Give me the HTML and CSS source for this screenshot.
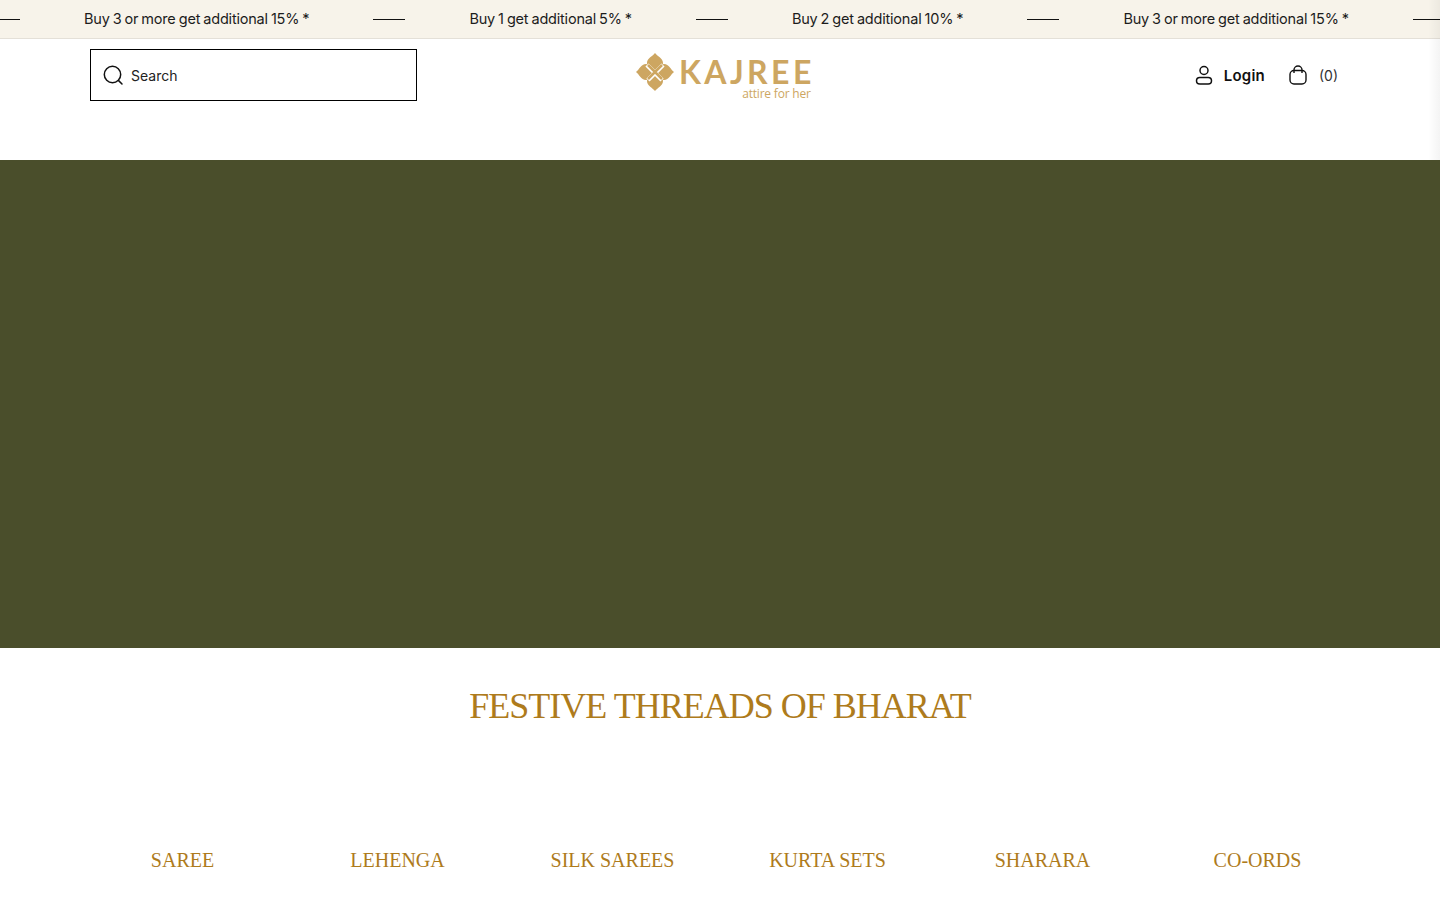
FILE: index.html
```html
<!DOCTYPE html>
<html lang="en">
<head>
  <meta charset="UTF-8">
  <title>Kajree - attire for her</title>
  <link rel="stylesheet" href="styles.css">
</head>
<body>
  <div class="announce">
    <div class="announce-track">
      <span class="announce-line"></span>
      <span class="announce-text">Buy 3 or more get additional 15% *</span>
      <span class="announce-line"></span>
      <span class="announce-text">Buy 1 get additional 5% *</span>
      <span class="announce-line"></span>
      <span class="announce-text">Buy 2 get additional 10% *</span>
      <span class="announce-line"></span>
      <span class="announce-text">Buy 3 or more get additional 15% *</span>
      <span class="announce-line"></span>
    </div>
  </div>

  <header class="header">
    <div class="search">
      <svg class="icon" width="22" height="22" viewBox="0 0 22 22" fill="none" stroke="#111" stroke-width="1.5">
        <circle cx="10.5" cy="10.5" r="8.2"/>
        <path d="M16.6 16.6L20 20" stroke-linecap="round"/>
      </svg>
      <span class="search-label">Search</span>
    </div>

    <a class="logo" href="#">
      <svg class="logo-mark" width="38" height="38" viewBox="0 0 38 38">
        <g fill="#cda661">
          <path d="M19 0C21 3 27 5 27 10C27 13 24 15 19 18C14 15 11 13 11 10C11 5 17 3 19 0Z"/>
          <path d="M19 38C21 35 27 33 27 28C27 25 24 23 19 20C14 23 11 25 11 28C11 33 17 35 19 38Z"/>
          <path d="M0 19C3 17 5 11 10 11C13 11 15 14 18 19C15 24 13 27 10 27C5 27 3 21 0 19Z"/>
          <path d="M38 19C35 17 33 11 28 11C25 11 23 14 20 19C23 24 25 27 28 27C33 27 35 21 38 19Z"/>
        </g>
        <path d="M11 12L26 27M27 12L12 27" fill="none" stroke="#fff" stroke-width="4.500"/>
        <path d="M12 12L26 26M26 12L12 26" fill="none" stroke="#cda661" stroke-width="2.500"/>
      </svg>
      <span class="logo-words">
        <span class="logo-name">KAJREE</span>
        <span class="logo-tag">attire for her</span>
      </span>
    </a>

    <div class="header-actions">
      <a class="login" href="#">
        <svg class="icon" width="18" height="20" viewBox="0 0 18 20" fill="none" stroke="#111" stroke-width="1.5">
          <circle cx="9" cy="5.500" r="4"/>
          <rect x="1.500" y="12.500" width="15" height="6.500" rx="3.250"/>
        </svg>
        <span>Login</span>
      </a>
      <a class="cart" href="#">
        <svg class="icon" width="18" height="20" viewBox="0 0 18 20" fill="none" stroke="#111" stroke-width="1.4">
          <rect x="1" y="5.500" width="16" height="13.500" rx="4"/>
          <path d="M5 8V5a4 4 0 0 1 8 0v3"/>
        </svg>
        <span class="cart-count">(0)</span>
      </a>
    </div>
  </header>
  <div class="edge-shade"></div>

  <section class="hero"></section>

  <main class="festive">
    <h2 class="festive-title">FESTIVE THREADS OF BHARAT</h2>
    <ul class="categories">
      <li>SAREE</li>
      <li>LEHENGA</li>
      <li>SILK SAREES</li>
      <li>KURTA SETS</li>
      <li>SHARARA</li>
      <li>CO-ORDS</li>
    </ul>
  </main>
</body>
</html>
```

FILE: styles.css
```css
html, body {
  height: 100%;
}
body {
  margin: 0;
  font-family: Inter, "Liberation Sans", sans-serif;
  background: #fff;
  color: #111;
  overflow: hidden;
}
a {
  color: inherit;
  text-decoration: none;
}
.icon {
  display: block;
  flex: none;
}

/* announcement bar */
.announce {
  height: 38px;
  background: #f7f3ea;
  border-bottom: 1px solid #e4e0d8;
  overflow: hidden;
}
.announce-track {
  display: flex;
  align-items: center;
  gap: 64px;
  height: 100%;
  margin-left: -12px;
  white-space: nowrap;
}
.announce-line {
  flex: none;
  width: 32px;
  height: 1px;
  background: #111;
}
.announce-text {
  font-size: 14.5px;
  line-height: 36px;
  letter-spacing: -0.2px;
  word-spacing: -0.8px;
  color: #1c1c1c;
}

/* header */
.header {
  display: grid;
  grid-template-columns: 546px 176px 1fr;
  align-items: start;
  height: 121px;
  box-sizing: border-box;
  padding: 10px 102px 0 90px;
  background: #fff;
}
.search {
  display: flex;
  align-items: center;
  gap: 7px;
  width: 327px;
  height: 52px;
  box-sizing: border-box;
  padding-left: 11px;
  border: 1px solid #000;
}
.search-label {
  font-size: 14px;
  color: #222;
}
.logo {
  display: flex;
  align-items: flex-start;
  gap: 5px;
  padding-top: 4px;
}
.logo-mark {
  flex: none;
}
.logo-words {
  display: flex;
  flex-direction: column;
  align-items: flex-end;
  margin-top: 4px;
  color: #cda661;
}
.logo-name {
  font-family: Lato, sans-serif;
  font-size: 32px;
  font-weight: 700;
  line-height: 30px;
  letter-spacing: 3.400px;
  margin-right: -3px;
}
.logo-tag {
  font-family: "Open Sans", sans-serif;
  font-size: 12px;
  line-height: 13px;
  letter-spacing: -0.2px;
  margin-right: 1px;
}
.header-actions {
  display: flex;
  justify-content: flex-end;
  align-items: center;
  gap: 24px;
  height: 52px;
}
.login, .cart {
  display: flex;
  align-items: center;
}
.login {
  gap: 11px;
  font-size: 15px;
  font-weight: 600;
  letter-spacing: 0.2px;
}
.cart {
  gap: 12px;
  font-size: 14px;
  color: #333;
}
.edge-shade {
  position: absolute;
  top: 0;
  right: 0;
  width: 12px;
  height: 160px;
  background: linear-gradient(to right, rgba(0,0,0,0), rgba(0,0,0,0.045));
  pointer-events: none;
}

/* hero */
.hero {
  height: 488px;
  background: #4a4e2b;
}

/* category section */
.festive {
  padding: 0 75px;
}
.festive-title {
  margin: 38px 0 0;
  font-family: "Liberation Serif", serif;
  font-size: 36px;
  font-weight: 400;
  line-height: 40px;
  letter-spacing: -1px;
  text-align: center;
  color: #ae7b1c;
}
.categories {
  display: grid;
  grid-template-columns: repeat(6, 1fr);
  margin: 122px 0 0;
  padding: 0;
  list-style: none;
  font-family: "Liberation Serif", serif;
  font-size: 20px;
  line-height: 24px;
  text-align: center;
  color: #ae7b1c;
}
```
